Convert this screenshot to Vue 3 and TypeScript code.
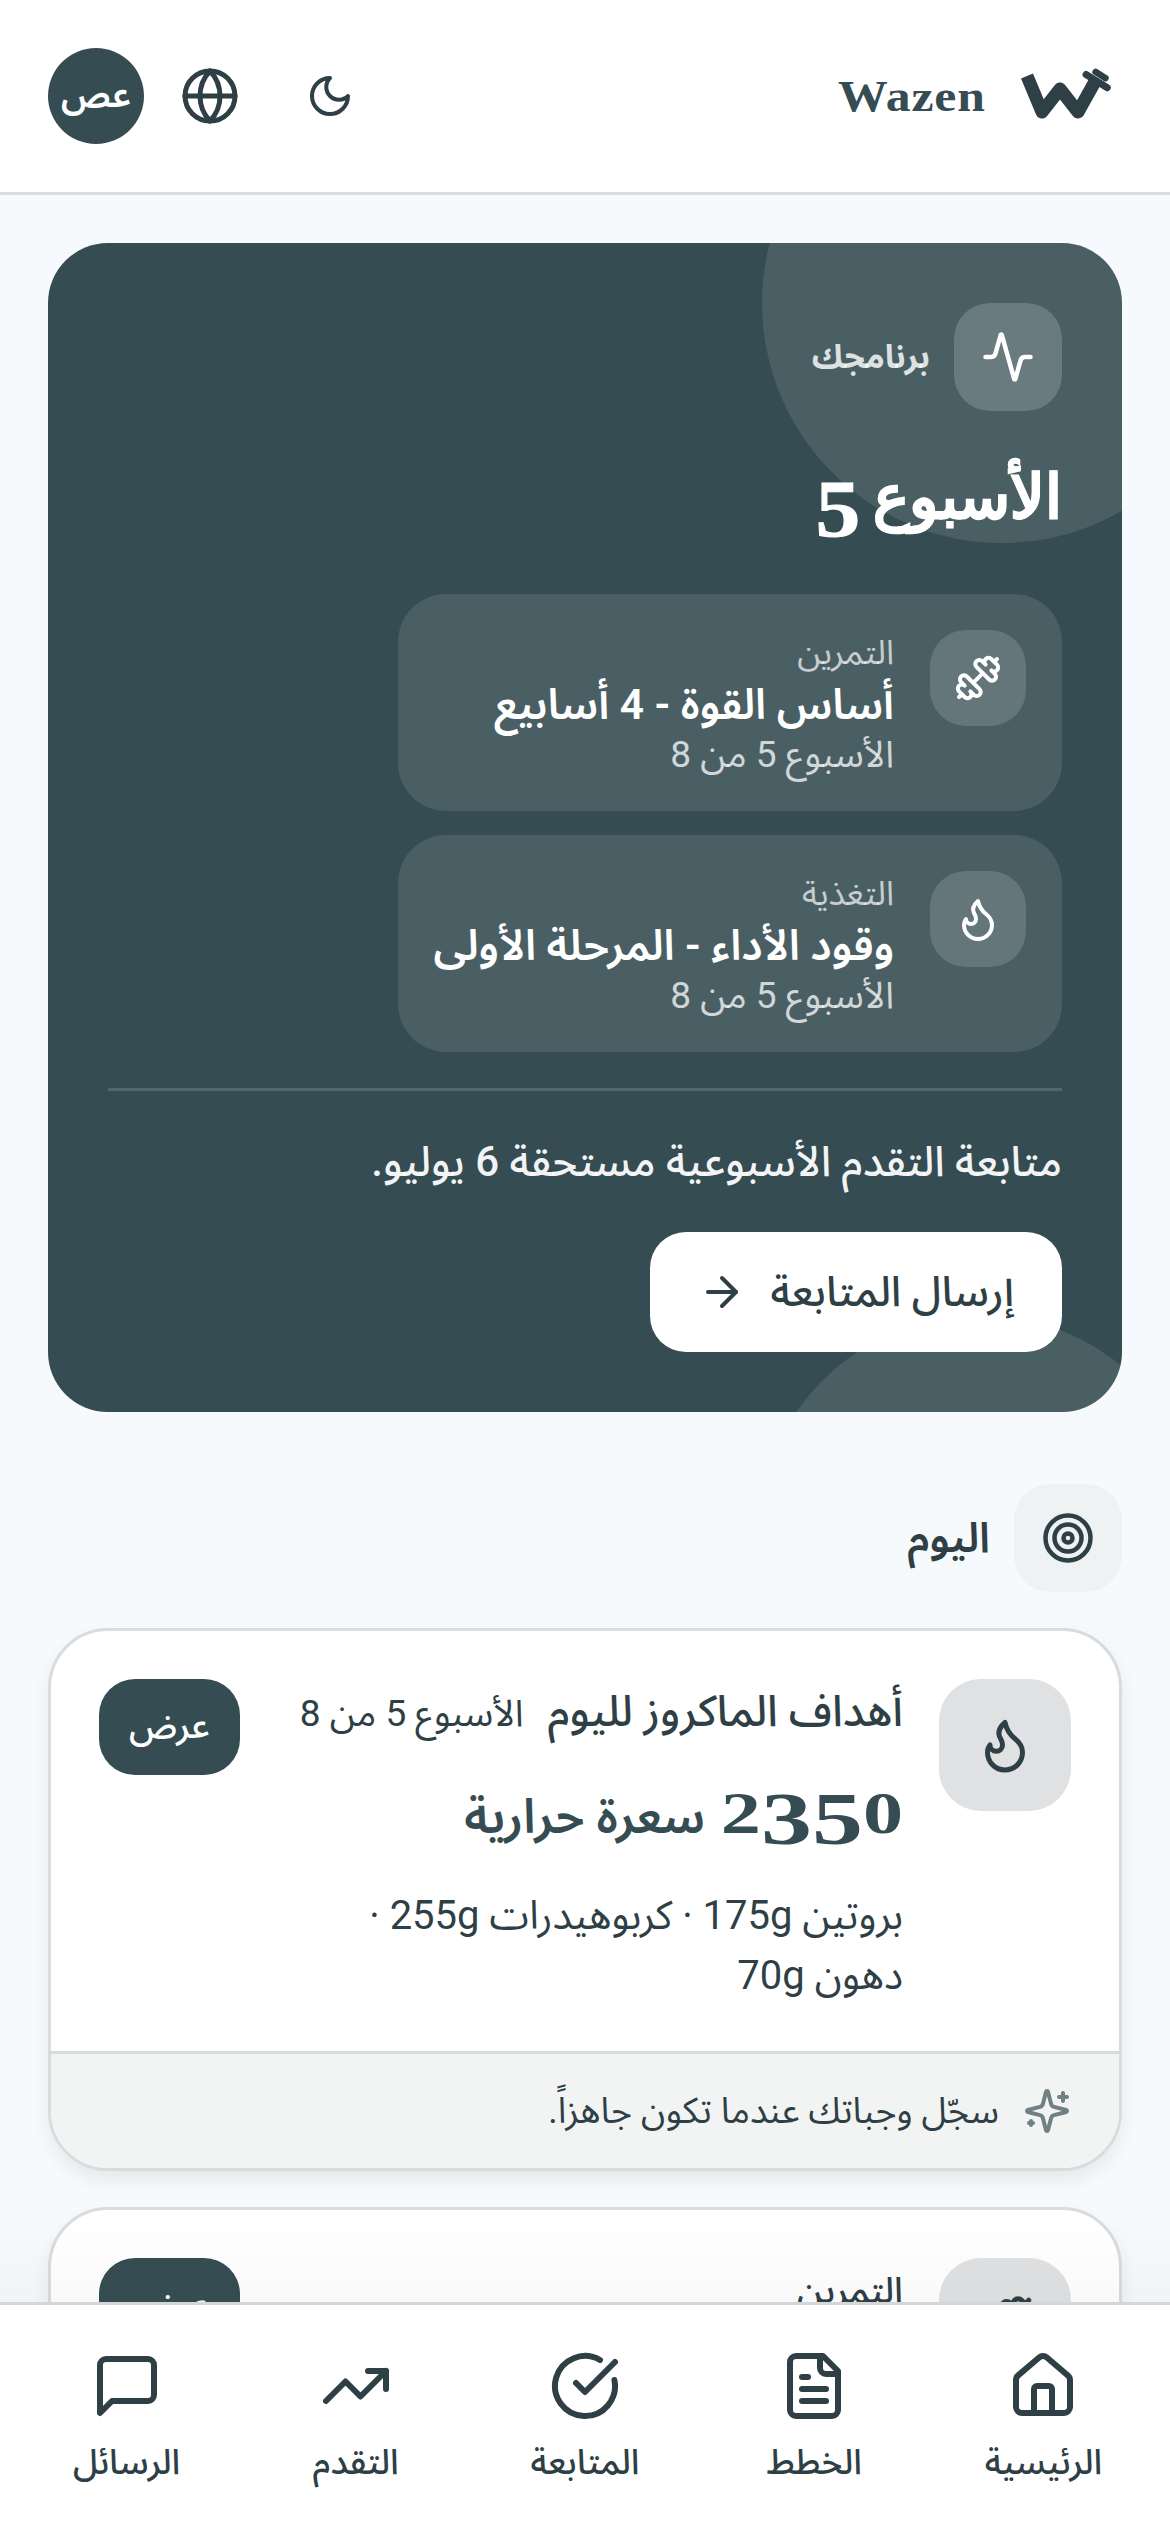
<script setup lang="ts">
const navItems = [
  { label: "الرئيسية", icon: "home" },
  { label: "الخطط", icon: "plans" },
  { label: "المتابعة", icon: "check" },
  { label: "التقدم", icon: "trend" },
  { label: "الرسائل", icon: "chat" },
];

const programs = [
  { label: "التمرين", title: "أساس القوة - 4 أسابيع", week: "الأسبوع 5 من 8", icon: "dumbbell" },
  { label: "التغذية", title: "وقود الأداء - المرحلة الأولى", week: "الأسبوع 5 من 8", icon: "flame" },
];

const dumbbell = "M14.4 14.4 9.6 9.6M18.657 21.485a2 2 0 1 1-2.829-2.828l-1.767 1.768a2 2 0 1 1-2.829-2.829l6.364-6.364a2 2 0 1 1 2.829 2.829l-1.768 1.767a2 2 0 1 1 2.828 2.829zM21.5 21.5l-1.4-1.4M3.9 3.9 2.5 2.5M6.404 12.768a2 2 0 1 1-2.829-2.829l1.768-1.767a2 2 0 1 1-2.828-2.829l2.828-2.828a2 2 0 1 1 2.829 2.828l1.767-1.768a2 2 0 1 1 2.829 2.829z";
const flame = "M8.5 14.5A2.5 2.5 0 0 0 11 12c0-1.38-.5-2-1-3-1.072-2.143-.224-4.054 2-6 .5 2.5 2 4.9 4 6.5 2 1.6 3 3.5 3 5.5a7 7 0 1 1-14 0c0-1.153.433-2.294 1-3a2.5 2.5 0 0 0 2.5 2.5z";
</script>

<template>
  <div class="screen" dir="rtl">
    <header class="top">
      <div class="brand">
        <svg class="logo" width="102" height="60" viewBox="0 0 102 60" fill="none">
          <path d="M7 10 22 46 40 23 58 46 77 12" stroke="#2e3f45" stroke-width="13" stroke-linejoin="round" />
          <g transform="translate(78 13) rotate(32)">
            <rect x="-16" y="-1" width="32" height="7" rx="3.5" fill="#2e3f45" />
            <rect x="-9" y="-8" width="18" height="6.5" rx="3" fill="#2e3f45" />
          </g>
        </svg>
        <span class="brand-name">Wazen</span>
      </div>
      <div class="top-actions">
        <button class="icon-btn">
          <svg width="48" height="48" viewBox="0 0 24 24" fill="none" stroke="currentColor" stroke-width="2" stroke-linecap="round" stroke-linejoin="round"><path d="M12 3a6 6 0 0 0 9 9 9 9 0 1 1-9-9Z" /></svg>
        </button>
        <button class="icon-btn">
          <svg width="60" height="60" viewBox="0 0 24 24" fill="none" stroke="currentColor" stroke-width="2" stroke-linecap="round" stroke-linejoin="round"><circle cx="12" cy="12" r="10" /><path d="M12 2a14.5 14.5 0 0 0 0 20 14.5 14.5 0 0 0 0-20" /><path d="M2 12h20" /></svg>
        </button>
        <div class="avatar">عص</div>
      </div>
    </header>

    <main class="content">
      <section class="hero">
        <span class="blob blob-top"></span>
        <span class="blob blob-bottom"></span>
        <div class="hero-body">
          <div class="hero-head">
            <span class="hero-icon">
              <svg width="54" height="54" viewBox="0 0 24 24" fill="none" stroke="currentColor" stroke-width="2" stroke-linecap="round" stroke-linejoin="round"><path d="M22 12h-2.48a2 2 0 0 0-1.93 1.46l-2.35 8.36a.25.25 0 0 1-.48 0L9.24 2.18a.25.25 0 0 0-.48 0l-2.35 8.36A2 2 0 0 1 4.49 12H2" /></svg>
            </span>
            <span class="hero-label">برنامجك</span>
          </div>
          <h1 class="hero-title">الأسبوع <span class="hero-num">5</span></h1>
          <div class="program-list">
            <div v-for="p in programs" :key="p.label" class="program">
              <span class="program-icon">
                <svg :class="{ flip: p.icon === 'dumbbell' }" width="48" height="48" viewBox="0 0 24 24" fill="none" stroke="currentColor" stroke-width="2" stroke-linecap="round" stroke-linejoin="round"><path :d="p.icon === 'flame' ? flame : dumbbell" /></svg>
              </span>
              <div class="program-text">
                <div class="program-label">{{ p.label }}</div>
                <div class="program-title">{{ p.title }}</div>
                <div class="program-week">{{ p.week }}</div>
              </div>
            </div>
          </div>
          <div class="hero-rule"></div>
          <p class="hero-note">متابعة التقدم الأسبوعية مستحقة 6 يوليو.</p>
          <button class="hero-btn">
            <span>إرسال المتابعة</span>
            <svg width="48" height="48" viewBox="0 0 24 24" fill="none" stroke="currentColor" stroke-width="2" stroke-linecap="round" stroke-linejoin="round"><path d="M5 12h14" /><path d="m12 5 7 7-7 7" /></svg>
          </button>
        </div>
      </section>

      <div class="section-head">
        <span class="section-icon">
          <svg width="54" height="54" viewBox="0 0 24 24" fill="none" stroke="currentColor" stroke-width="2" stroke-linecap="round" stroke-linejoin="round"><circle cx="12" cy="12" r="10" /><circle cx="12" cy="12" r="6" /><circle cx="12" cy="12" r="2" /></svg>
        </span>
        <h2 class="section-title">اليوم</h2>
      </div>

      <article class="card">
        <div class="card-main">
          <span class="card-icon">
            <svg width="60" height="60" viewBox="0 0 24 24" fill="none" stroke="currentColor" stroke-width="2" stroke-linecap="round" stroke-linejoin="round"><path :d="flame" /></svg>
          </span>
          <div class="card-text">
            <div class="card-line">
              <span class="card-title">أهداف الماكروز لليوم</span>
              <span class="card-week">الأسبوع 5 من 8</span>
            </div>
            <div class="card-big"><span class="num" dir="ltr"><span>2</span><span class="drop">3</span><span class="drop">5</span><span>0</span></span> سعرة حرارية</div>
            <p class="card-desc">بروتين 175g · كربوهيدرات 255g · دهون 70g</p>
          </div>
          <button class="card-btn">عرض</button>
        </div>
        <div class="card-foot">
          <svg width="48" height="48" viewBox="0 0 24 24" fill="none" stroke="currentColor" stroke-width="2" stroke-linecap="round" stroke-linejoin="round"><path d="M9.937 15.5A2 2 0 0 0 8.5 14.063l-6.135-1.582a.5.5 0 0 1 0-.962L8.5 9.936A2 2 0 0 0 9.937 8.5l1.582-6.135a.5.5 0 0 1 .963 0L14.063 8.5A2 2 0 0 0 15.5 9.937l6.135 1.581a.5.5 0 0 1 0 .964L15.5 14.063a2 2 0 0 0-1.437 1.437l-1.582 6.135a.5.5 0 0 1-.963 0z" /><path d="M20 3v4" /><path d="M22 5h-4" /><path d="M4 17v2" /><path d="M5 18H3" /></svg>
          <span>سجّل وجباتك عندما تكون جاهزاً.</span>
        </div>
      </article>

      <article class="card">
        <div class="card-main">
          <span class="card-icon">
            <svg class="flip" width="60" height="60" viewBox="0 0 24 24" fill="none" stroke="currentColor" stroke-width="2" stroke-linecap="round" stroke-linejoin="round"><path :d="dumbbell" /></svg>
          </span>
          <div class="card-text">
            <div class="card-line"><span class="card-label">التمرين</span></div>
          </div>
          <button class="card-btn">عرض</button>
        </div>
      </article>
    </main>

    <nav class="tabbar">
      <a v-for="item in navItems" :key="item.label" class="tab">
        <svg width="72" height="72" viewBox="0 0 24 24" fill="none" stroke="currentColor" stroke-width="2" stroke-linecap="round" stroke-linejoin="round">
          <template v-if="item.icon === 'home'">
            <path d="M15 21v-8a1 1 0 0 0-1-1h-4a1 1 0 0 0-1 1v8" />
            <path d="M3 10a2 2 0 0 1 .709-1.528l7-5.999a2 2 0 0 1 2.582 0l7 5.999A2 2 0 0 1 21 10v9a2 2 0 0 1-2 2H5a2 2 0 0 1-2-2z" />
          </template>
          <template v-else-if="item.icon === 'plans'">
            <path d="M15 2H6a2 2 0 0 0-2 2v16a2 2 0 0 0 2 2h12a2 2 0 0 0 2-2V7Z" />
            <path d="M14 2v4a2 2 0 0 0 2 2h4" />
            <path d="M10 9H8" /><path d="M16 13H8" /><path d="M16 17H8" />
          </template>
          <template v-else-if="item.icon === 'check'">
            <path d="M21.801 10A10 10 0 1 1 17 3.335" />
            <path d="m9 11 3 3L22 4" />
          </template>
          <template v-else-if="item.icon === 'trend'">
            <path d="M16 7h6v6" />
            <path d="m22 7-8.5 8.5-5-5L2 17" />
          </template>
          <template v-else>
            <path d="M21 15a2 2 0 0 1-2 2H7l-4 4V5a2 2 0 0 1 2-2h14a2 2 0 0 1 2 2z" />
          </template>
        </svg>
        <span>{{ item.label }}</span>
      </a>
    </nav>
  </div>
</template>

<style>
html, body { margin: 0; background: #f6fafc; }
</style>

<style scoped>
.screen {
  height: 2532px;
  display: flex;
  flex-direction: column;
  overflow: hidden;
  background: #f6fafc;
  color: #2e3f45;
  font-family: Roboto, "Noto Sans Arabic", "Noto Sans", sans-serif;
}

.top {
  flex: none;
  height: 192px;
  padding: 0 48px;
  display: flex;
  align-items: center;
  justify-content: space-between;
  background: #fff;
  border-bottom: 3px solid #d9dcdc;
}
.brand { display: flex; align-items: center; gap: 34px; }
.logo { display: block; }
.brand-name {
  display: inline-block;
  font-family: "Liberation Serif", serif;
  font-weight: 700;
  font-size: 44px;
  letter-spacing: 0.7px;
  color: #354c52;
  transform: scaleX(1.13);
  transform-origin: right center;
}
.top-actions { display: flex; align-items: center; }
.icon-btn {
  width: 120px;
  height: 120px;
  display: flex;
  align-items: center;
  justify-content: center;
  padding: 0;
  border: 0;
  background: none;
  color: #2e3f45;
}
.avatar {
  width: 96px;
  height: 96px;
  margin-right: 6px;
  border-radius: 50%;
  background: #354d52;
  color: #fff;
  font-size: 36px;
  font-weight: 600;
  display: flex;
  align-items: center;
  justify-content: center;
}

.content {
  flex: 1;
  min-height: 0;
  overflow: hidden;
  padding: 48px 48px 0;
}

.hero {
  position: relative;
  overflow: hidden;
  border-radius: 60px;
  background: #354d52;
  color: #fff;
}
.blob {
  position: absolute;
  border-radius: 50%;
  background: rgba(255, 255, 255, 0.1);
}
.blob-top { width: 480px; height: 480px; top: -180px; right: -120px; }
.blob-bottom { width: 444px; height: 444px; bottom: -347px; left: 710px; }
.hero-body { position: relative; padding: 60px; }
.hero-head { display: flex; align-items: center; gap: 24px; }
.hero-icon {
  width: 108px;
  height: 108px;
  border-radius: 36px;
  background: rgba(255, 255, 255, 0.18);
  display: flex;
  align-items: center;
  justify-content: center;
}
.hero-label { font-size: 33px; font-weight: 700; color: rgba(255, 255, 255, 0.82); }
.hero-title {
  margin: 26px 0 0;
  font-family: "Liberation Serif", "Noto Sans", serif;
  font-size: 61px;
  line-height: 121px;
  font-weight: 700;
  -webkit-text-stroke: 1px #fff;
}
.hero-num {
  display: inline-block;
  font-size: 80px;
  line-height: 60px;
  vertical-align: -18px;
  transform: scaleX(1.12);
}

.program-list {
  margin-top: 36px;
  width: fit-content;
  display: flex;
  flex-direction: column;
  gap: 24px;
}
.program {
  display: flex;
  gap: 36px;
  padding: 36px;
  border-radius: 48px;
  background: rgba(255, 255, 255, 0.1);
}
.program-icon {
  flex: none;
  width: 96px;
  height: 96px;
  border-radius: 36px;
  background: rgba(255, 255, 255, 0.15);
  display: flex;
  align-items: center;
  justify-content: center;
}
.flip { transform: scaleX(-1); }
.program-label { font-size: 34px; line-height: 45px; color: rgba(255, 255, 255, 0.7); }
.program-title { font-size: 42.5px; line-height: 60px; font-weight: 600; }
.program-week { font-size: 37px; line-height: 40px; color: rgba(255, 255, 255, 0.75); }

.hero-rule { height: 3px; margin-top: 36px; background: rgba(255, 255, 255, 0.15); }
.hero-note { margin: 36px 0 0; font-size: 42px; line-height: 69px; font-weight: 500; color: rgba(255, 255, 255, 0.95); }
.hero-btn {
  margin-top: 36px;
  height: 120px;
  padding: 0 48px;
  display: flex;
  align-items: center;
  gap: 24px;
  border: 0;
  border-radius: 36px;
  background: #fff;
  color: #2e3f45;
  font: 500 42px Roboto, "Noto Sans Arabic", "Noto Sans", sans-serif;
}

.section-head { margin-top: 72px; display: flex; align-items: center; gap: 24px; }
.section-icon {
  width: 108px;
  height: 108px;
  border-radius: 36px;
  background: #eff2f3;
  display: flex;
  align-items: center;
  justify-content: center;
}
.section-title { margin: 0; font-size: 42px; font-weight: 600; }

.card {
  margin-top: 36px;
  border: 3px solid #d9dcdc;
  border-radius: 60px;
  background: #fff;
  overflow: hidden;
  box-shadow: 0 9px 18px rgba(0, 0, 0, 0.07);
}
.card-main { display: flex; align-items: flex-start; gap: 36px; padding: 48px 48px 45px; }
.card-icon {
  flex: none;
  width: 132px;
  height: 132px;
  border-radius: 42px;
  background: #dfe1e3;
  display: flex;
  align-items: center;
  justify-content: center;
}
.card-text { flex: 1; min-width: 0; }
.card-line { margin-top: 3px; display: flex; align-items: baseline; gap: 24px; line-height: 60px; }
.card-title { font-size: 43.5px; font-weight: 500; }
.card-label { font-size: 36px; font-weight: 500; }
.card-week { font-size: 37px; }
.card-big { margin-top: 36px; font-size: 48px; line-height: 66px; font-weight: 600; color: #354c52; }
.num {
  display: inline-block;
  margin-left: 52px;
  font-family: "Liberation Serif", serif;
  font-size: 59px;
  font-weight: 700;
  transform: scaleX(1.36);
  transform-origin: right center;
}
.drop { font-size: 75px; vertical-align: -11px; line-height: 50px; }
.card-desc { margin: 36px 0 0; font-size: 40px; line-height: 60px; }
.card-btn {
  flex: none;
  height: 96px;
  padding: 0 30px;
  border: 0;
  border-radius: 36px;
  background: #354d52;
  color: #fff;
  font: 500 36px Roboto, "Noto Sans Arabic", "Noto Sans", sans-serif;
}
.card-foot {
  display: flex;
  align-items: center;
  gap: 24px;
  padding: 30px 48px;
  line-height: 54px;
  border-top: 3px solid #d9dcdc;
  background: #f2f4f4;
  font-size: 36px;
}
.card-foot svg { color: #708085; }

.tabbar {
  position: relative;
  flex: none;
  height: 227px;
  padding: 0 12px;
  display: grid;
  grid-template-columns: repeat(5, 1fr);
  background: #fff;
  border-top: 3px solid #d9dcdc;
}
.tabbar::before {
  content: "";
  position: absolute;
  left: 0;
  right: 0;
  bottom: 100%;
  height: 90px;
  background: linear-gradient(rgba(0, 0, 0, 0), rgba(0, 0, 0, 0.025));
  pointer-events: none;
}
.tab {
  padding-top: 45px;
  display: flex;
  flex-direction: column;
  align-items: center;
  gap: 17px;
  font-size: 35px;
  line-height: 48px;
  font-weight: 500;
  color: #2e3f45;
}
</style>
